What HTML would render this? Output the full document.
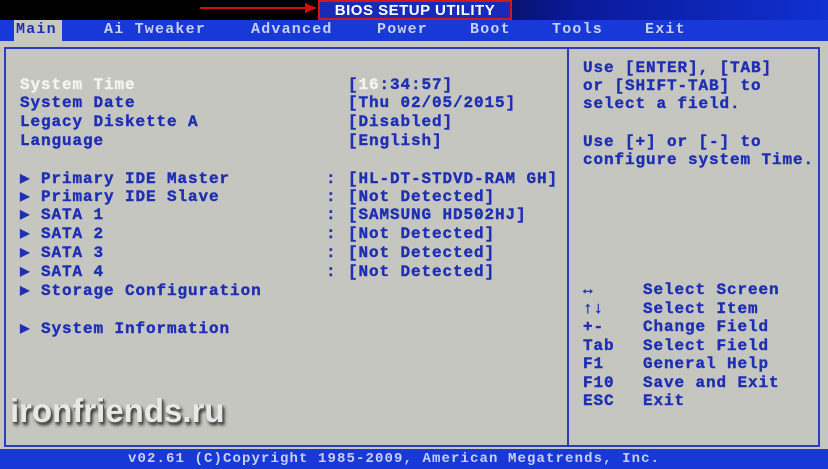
<!DOCTYPE html><html><head><style>
body{margin:0;width:828px;height:469px;overflow:hidden;background:#000;position:relative;font-family:"Liberation Mono",monospace;font-weight:bold;}
.t{position:absolute;font-size:16px;letter-spacing:0.9px;line-height:18px;color:#1e2fb4;white-space:pre;-webkit-text-stroke:0.4px #1e2fb4;}
.w{color:#f4f4f0;-webkit-text-stroke:0.4px #f4f4f0}
.m{position:absolute;font-size:15px;letter-spacing:1.2px;line-height:18px;color:#c8d0f0;white-space:pre;top:21px}
</style></head><body>
<div style="position:absolute;left:0;top:0;width:828px;height:22px;background:linear-gradient(90deg,#000 0%,#000 40%,#0a1a9a 70%,#1030d0 100%)"></div>
<div style="position:absolute;left:200px;top:7px;width:115px;height:2px;background:#d01010"></div>
<div style="position:absolute;left:305px;top:3px;border-left:12px solid #d01010;border-top:5px solid transparent;border-bottom:5px solid transparent"></div>
<div style="position:absolute;left:318px;top:0;width:194px;height:20px;border:2px solid #d01818;box-sizing:border-box;background:#1a2ab8;color:#fff;font-family:'Liberation Sans Narrow','Liberation Sans',sans-serif;font-weight:bold;font-size:15px;text-align:center;line-height:17px;letter-spacing:.5px">BIOS SETUP UTILITY</div>
<div style="position:absolute;left:0;top:20px;width:828px;height:21px;background:#1838d8"></div>
<div style="position:absolute;left:14px;top:20px;width:48px;height:21px;background:#c8c8c2"></div>
<div class="m" style="left:16px;color:#1e2fb4">Main</div>
<div class="m" style="left:104px">Ai Tweaker</div>
<div class="m" style="left:251px">Advanced</div>
<div class="m" style="left:377px">Power</div>
<div class="m" style="left:470px">Boot</div>
<div class="m" style="left:552px">Tools</div>
<div class="m" style="left:645px">Exit</div>
<div style="position:absolute;left:0;top:41px;width:828px;height:408px;background:#c6c6c0"></div>
<div style="position:absolute;left:4px;top:47px;width:816px;height:400px;border:2px solid #2a3cc0;box-sizing:border-box"></div>
<div style="position:absolute;left:567px;top:47px;width:2px;height:400px;background:#2a3cc0"></div>
<div class="t w" style="left:20px;top:76px">System Time</div>
<div class="t" style="left:20px;top:94px">System Date</div>
<div class="t" style="left:20px;top:113px">Legacy Diskette A</div>
<div class="t" style="left:20px;top:132px">Language</div>
<div class="t" style="left:348px;top:76px">[<span class="w">16</span>:34:57]</div>
<div class="t" style="left:348px;top:94px">[Thu 02/05/2015]</div>
<div class="t" style="left:348px;top:113px">[Disabled]</div>
<div class="t" style="left:348px;top:132px">[English]</div>
<div class="t" style="left:20px;top:170px">▶ Primary IDE Master</div>
<div class="t" style="left:20px;top:188px">▶ Primary IDE Slave</div>
<div class="t" style="left:20px;top:206px">▶ SATA 1</div>
<div class="t" style="left:20px;top:225px">▶ SATA 2</div>
<div class="t" style="left:20px;top:244px">▶ SATA 3</div>
<div class="t" style="left:20px;top:263px">▶ SATA 4</div>
<div class="t" style="left:20px;top:282px">▶ Storage Configuration</div>
<div class="t" style="left:20px;top:320px">▶ System Information</div>
<div class="t" style="left:326px;top:170px">:</div>
<div class="t" style="left:326px;top:188px">:</div>
<div class="t" style="left:326px;top:206px">:</div>
<div class="t" style="left:326px;top:225px">:</div>
<div class="t" style="left:326px;top:244px">:</div>
<div class="t" style="left:326px;top:263px">:</div>
<div class="t" style="left:348px;top:170px">[HL-DT-STDVD-RAM GH]</div>
<div class="t" style="left:348px;top:188px">[Not Detected]</div>
<div class="t" style="left:348px;top:206px">[SAMSUNG HD502HJ]</div>
<div class="t" style="left:348px;top:225px">[Not Detected]</div>
<div class="t" style="left:348px;top:244px">[Not Detected]</div>
<div class="t" style="left:348px;top:263px">[Not Detected]</div>
<div class="t" style="left:583px;top:59px">Use [ENTER], [TAB]
or [SHIFT-TAB] to
select a field.</div>
<div class="t" style="left:583px;top:133px">Use [+] or [-] to
configure system Time.</div>
<div class="t" style="left:583px;top:281px;line-height:18.5px">↔
↑↓
+-
Tab
F1
F10
ESC</div>
<div class="t" style="left:643px;top:281px;line-height:18.5px">Select Screen
Select Item
Change Field
Select Field
General Help
Save and Exit
Exit</div>
<div style="position:absolute;left:10px;top:392px;font-family:'Liberation Sans Narrow','Liberation Sans',sans-serif;font-weight:bold;font-size:33px;color:#e8e8e4;text-shadow:1px 1px 0 #555,2px 3px 3px #222">ironfriends.ru</div>
<div style="position:absolute;left:0;top:449px;width:828px;height:20px;background:#1838d8"></div>
<div class="t" style="left:128px;top:450px;color:#c8d0f0;-webkit-text-stroke:0;font-size:14px;letter-spacing:1.1px">v02.61 (C)Copyright 1985-2009, American Megatrends, Inc.</div>
</body></html>
